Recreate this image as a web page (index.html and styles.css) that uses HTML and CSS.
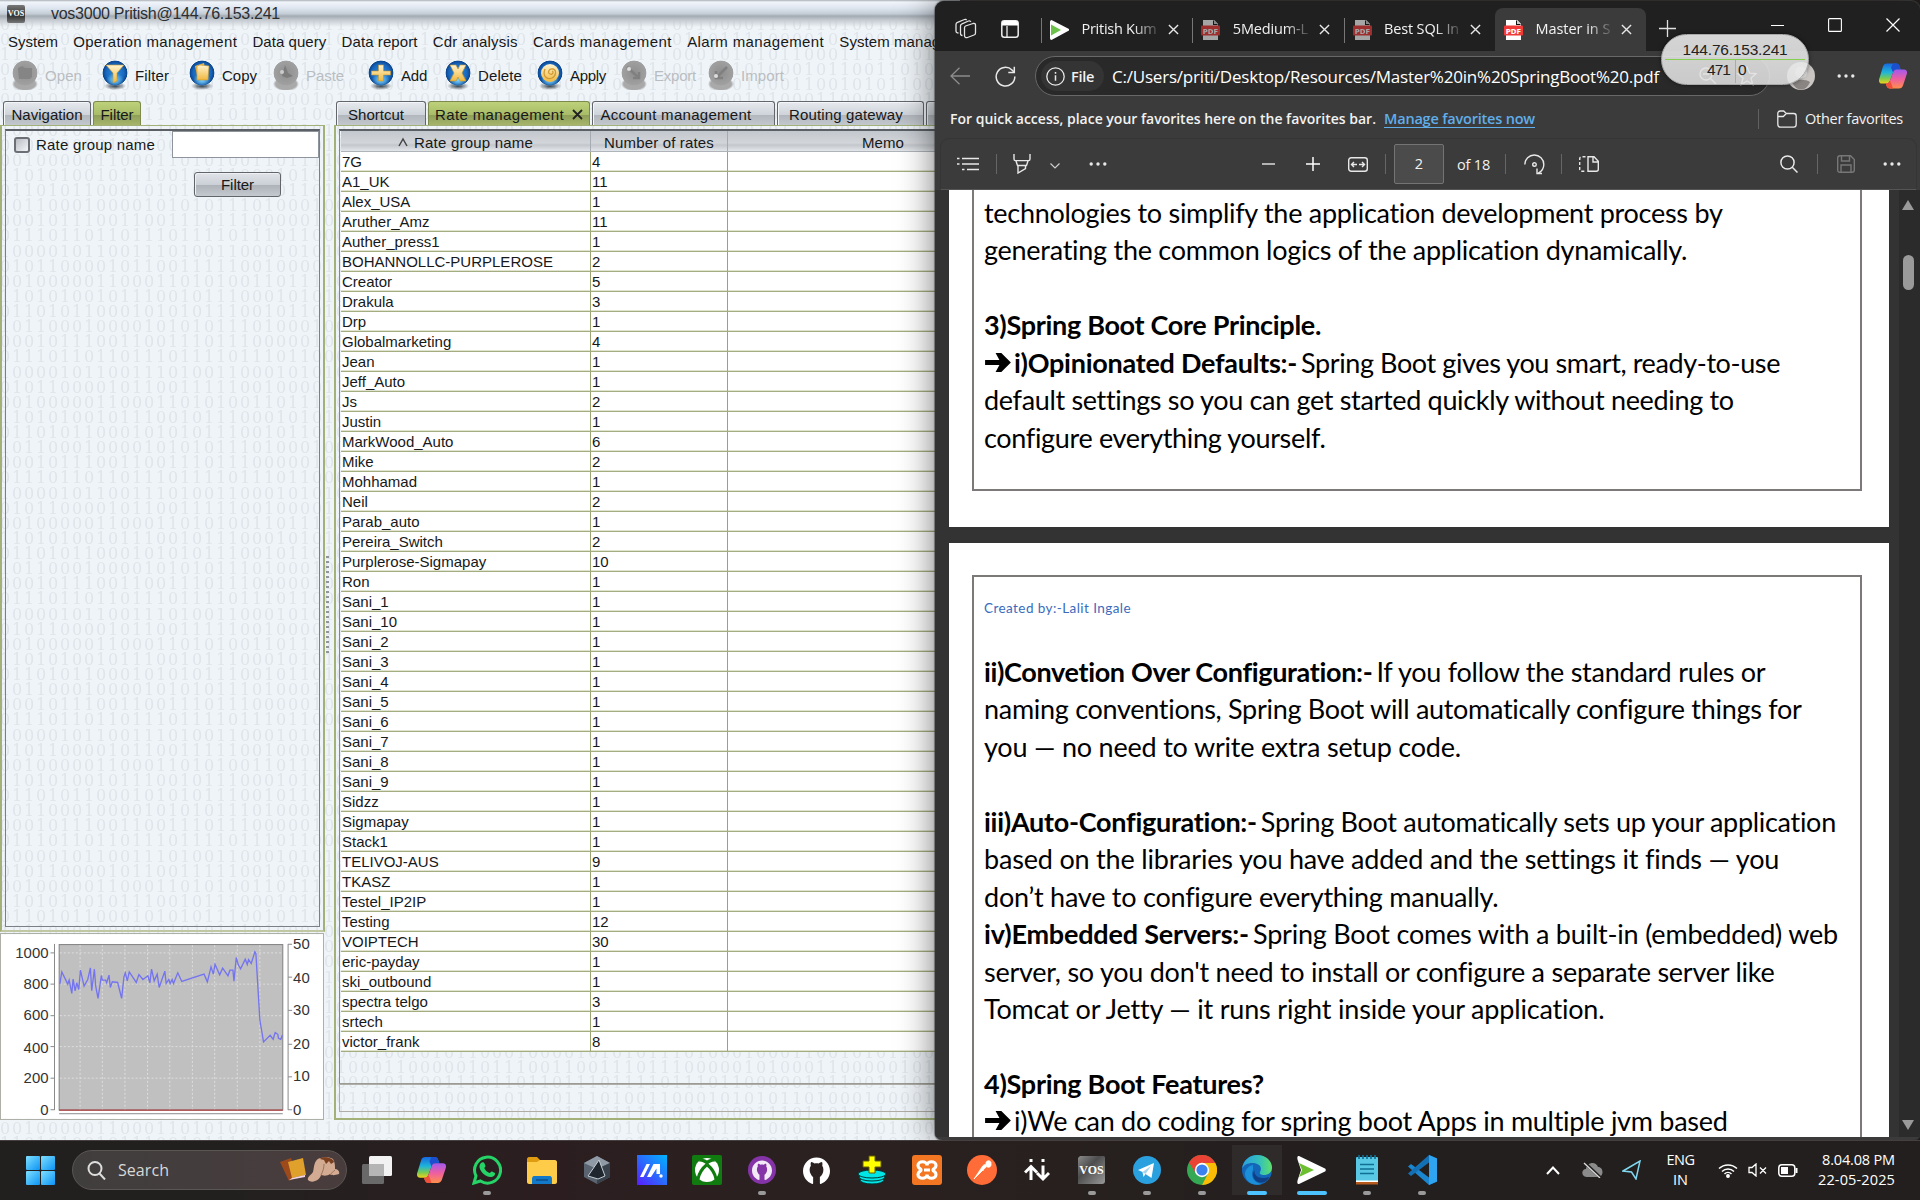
FILE: index.html
```html
<!DOCTYPE html>
<html lang="en">
<head>
<meta charset="utf-8">
<title>Desktop</title>
<link rel="stylesheet" href="styles.css">
</head>
<body>
<svg class="defs" width="0" height="0" aria-hidden="true">
  <defs>
    <linearGradient id="cpA" x1="0" y1="0" x2="0" y2="1"><stop offset="0" stop-color="#1769e0"/><stop offset=".45" stop-color="#20b5d8"/><stop offset=".75" stop-color="#7ccb4f"/><stop offset="1" stop-color="#f2d21c"/></linearGradient>
    <linearGradient id="cpB" x1="0" y1="0" x2="0" y2="1"><stop offset="0" stop-color="#a259f0"/><stop offset=".5" stop-color="#ee5fa0"/><stop offset="1" stop-color="#ff8f4a"/></linearGradient>
    <linearGradient id="gold" x1="0" y1="0" x2="0" y2="1"><stop offset="0" stop-color="#fff3cf"/><stop offset="1" stop-color="#f0b83e"/></linearGradient>
    <linearGradient id="edgeA" x1="0" y1="0" x2="1" y2="0"><stop offset="0" stop-color="#2a9fe0"/><stop offset=".6" stop-color="#35c1b9"/><stop offset="1" stop-color="#5fe06a"/></linearGradient>
    <linearGradient id="blueM" x1="0" y1="1" x2="1" y2="0"><stop offset="0" stop-color="#5a1cff"/><stop offset=".5" stop-color="#2a6cff"/><stop offset="1" stop-color="#00b4ff"/></linearGradient>
    <linearGradient id="vosG" x1="0" y1="0" x2="1" y2="1"><stop offset="0" stop-color="#8a8a8a"/><stop offset=".4" stop-color="#4d4d4d"/><stop offset="1" stop-color="#999"/></linearGradient>
    <linearGradient id="winG" x1="0" y1="0" x2="1" y2="1"><stop offset="0" stop-color="#7fe0ff"/><stop offset="1" stop-color="#0a93f5"/></linearGradient>
    <symbol id="copilot" viewBox="0 0 28 25">
      <path d="M8 0h9c2 0 3 1 3.600 3l1 3h-4c-2 0-3 1-3.600 3l-3 8c-.6 2-2 3-4 3H3c-2.500 0-3.500-2-2.800-4.500L4 3C4.600 1 6 0 8 0z" fill="url(#cpA)"/>
      <path d="M14 0h3c2 0 3 1 3.600 3l1 3h-4c-2 0-3 1-3.600 3L12 4z" fill="#1b4fd0"/>
      <path d="M20 25h-9c-2 0-3-1-3.600-3l-.6-2c2.200 0 3.600-1 4.200-3l3-8c.6-2 2-3 4-3h7c2.500 0 3.500 2 2.800 4.500L24 22c-.6 2-2 3-4 3z" fill="url(#cpB)"/>
      <path d="M14 25h-3c-2 0-3-1-3.600-3l-.6-2c2.200 0 3.600-1 4.200-3l2 5z" fill="#f0503a"/>
    </symbol>
    <symbol id="pdf" viewBox="0 0 19 20">
      <path d="M2 0h11l4 4v16H2z" fill="#fff"/><path d="M12 0v5h5z" fill="#111"/><path d="M13 0l4 4h-4z" fill="#ccc"/>
      <rect x="0" y="5.500" width="19" height="10" rx="1" fill="#f03a3a"/>
      <text x="9.500" y="13.600" font-family="DejaVu Sans" font-weight="700" font-size="6.800" fill="#fff" text-anchor="middle">PDF</text>
    </symbol>
    <symbol id="close" viewBox="0 0 12 12"><path d="M1 1l10 10M11 1L1 11" stroke="#e8e8e8" stroke-width="1.500"/></symbol>
    <symbol id="octo" viewBox="0 0 24 24"><path d="M12 .5C5.400.5 0 5.800 0 12.500c0 5.300 3.400 9.800 8.200 11.400.6.1.8-.3.800-.6v-5.600c-.9-.6-1.600-1.300-2-2.400C5.500 13 5.500 9.500 7 7.700c-.3-1-.2-2.300.2-3.200 1.200 0 2.300.7 3 1.200 1.200-.3 2.500-.3 3.700 0 .8-.5 1.900-1.200 3-1.200.4.900.5 2.200.2 3.200 1.400 1.800 1.400 5.300 0 7.600-.5 1.100-1.200 1.800-2.100 2.400v5.600c0 .3.200.7.800.6C20.600 22.300 24 17.800 24 12.500 24 5.800 18.600.5 12 .5z"/></symbol>
    <symbol id="dots" viewBox="0 0 18 4"><g fill="#e8e8e8"><circle cx="2.200" cy="2" r="1.700"/><circle cx="9" cy="2" r="1.700"/><circle cx="15.800" cy="2" r="1.700"/></g></symbol>
  </defs>
</svg>

<main class="desktop">
  <section class="vos">
    <header class="vos-title"><i class="vos-logo">VOS</i><span data-w="229">vos3000 Pritish@144.76.153.241</span></header>
    <nav class="vos-menu">
      <span data-w="50">System</span><span data-w="164">Operation management</span><span data-w="74">Data query</span><span data-w="76">Data report</span><span data-w="85">Cdr analysis</span><span data-w="139">Cards management</span><span data-w="137">Alarm management</span><span data-w="143">System management</span>
    </nav>
    <div class="vos-tools">
      <div class="tool off"><svg class="orb" viewBox="0 0 26 30"><path d="M6 8l4-2 3 2h7v9l-2 2H7z" fill="#858585"/></svg><span data-w="37">Open</span></div>
      <div class="tool"><svg class="orb" viewBox="0 0 26 30"><path d="M4 5h18l-7 8v8l-4 2v-10z" fill="url(#gold)" stroke="#c9932a" stroke-width=".6"/></svg><span data-w="34">Filter</span></div>
      <div class="tool"><svg class="orb" viewBox="0 0 26 30"><path d="M6 6l9-3 3 14-9 3z" fill="#e9b548"/><path d="M8 6l3-1 9 1-1 14-11 0z" fill="url(#gold)" stroke="#c9932a" stroke-width=".6"/></svg><span data-w="35">Copy</span></div>
      <div class="tool off"><svg class="orb" viewBox="0 0 26 30"><path d="M12 5l3 8 5 3-6 2-5-2z" fill="#7c7c7c"/><circle cx="9" cy="12" r="2" fill="#ccc"/></svg><span data-w="38">Paste</span></div>
      <div class="tool"><svg class="orb" viewBox="0 0 26 30"><path d="M10.500 5h5v6h7v4h-7v6h-5v-6h-7v-4h7z" fill="url(#gold)" stroke="#c9932a" stroke-width=".6"/></svg><span data-w="26">Add</span></div>
      <div class="tool"><svg class="orb" viewBox="0 0 26 30"><path d="M5 5h6l2 4 2-4h6l-4 8 4 8h-6l-2-4-2 4H5l4-8z" fill="url(#gold)" stroke="#c9932a" stroke-width=".6"/></svg><span data-w="44">Delete</span></div>
      <div class="tool"><svg class="orb" viewBox="0 0 26 30"><circle cx="13" cy="13" r="9" fill="url(#gold)"/><path d="M8 9c-3 8 3 11 7 9s5-8 1-9-6 4-3 5 4-2 2-3" fill="none" stroke="#cf9a35" stroke-width="1.300"/></svg><span data-w="36">Apply</span></div>
      <div class="tool off"><svg class="orb" viewBox="0 0 26 30"><path d="M6 7l12 11M18 12v6h-6" stroke="#808080" stroke-width="2.500" fill="none"/><circle cx="8" cy="9" r="2" fill="#ddd"/></svg><span data-w="42">Export</span></div>
      <div class="tool off"><svg class="orb" viewBox="0 0 26 30"><path d="M19 7L8 18M8 11v7h7" stroke="#808080" stroke-width="2.500" fill="none"/><circle cx="8" cy="16" r="2" fill="#ddd"/></svg><span data-w="43">Import</span></div>
    </div>
    <div class="vos-body">
      <aside class="side">
        <div class="vtabs"><div class="vtab t-nav"><span data-w="71">Navigation</span></div><div class="vtab on t-fil"><span data-w="33">Filter</span></div></div>
        <div class="frame"><div class="inner">
          <div class="frow"><i class="check"></i><span data-w="119">Rate group name</span><i class="input"></i></div>
          <div class="btn"><span data-w="33">Filter</span></div>
        </div></div>
        <svg class="chart" viewBox="3 102 969 555">
          <rect x="3" y="102" width="969" height="555" fill="#fff"/>
          <rect x="178" y="133" width="673" height="498" fill="#c0c0c0" stroke="#808080" stroke-width="3"/>
          <path d="M241 135V630M308 135V630M376 135V630M444 135V630M511 135V630M579 135V630M646 135V630M714 135V630M782 135V630M180 158H850M180 252H850M180 347H850M180 440H850M180 535H850" stroke="#dedede" stroke-width="3" stroke-dasharray="6 6"/>
          <path d="M164 131V631M152 158H164M152 252H164M152 347H164M152 440H164M152 535H164M152 630H164M867 131V631M867 132H879M867 231H879M867 331H879M867 433H879M867 531H879M867 630H879M178 642H851" stroke="#8a8a8a" stroke-width="3"/>
          <path d="M178 631H851" stroke="#b04040" stroke-width="4"/>
          <polyline fill="none" stroke="#7474f0" stroke-width="4" points="180,253 186,215 204,252 208,240 216,280 220,237 226,272 231,248 237,268 242,210 253,258 264,238 272,203 276,272 284,207 288,258 295,295 305,226 308,240 318,240 321,248 328,225 332,262 338,245 354,247 366,295 373,230 377,218 383,242 389,215 410,247 418,223 430,238 445,227 451,248 456,207 464,242 473,222 479,262 496,213 500,250 508,238 512,250 518,238 522,250 535,218 547,244 614,222 624,245 635,200 642,222 647,192 661,224 670,204 686,227 692,210 701,210 704,243 711,172 717,194 724,206 738,177 744,193 748,178 756,190 767,155 770,160 782,360 793,426 813,406 822,418 828,398 836,403 838,415 845,418 850,405"/>
          <g class="axis" text-anchor="end"><text x="146" y="174">1000</text><text x="146" y="267">800</text><text x="146" y="361">600</text><text x="146" y="458">400</text><text x="146" y="551">200</text><text x="146" y="646">0</text></g>
          <g class="axis"><text x="882" y="147">50</text><text x="882" y="248">40</text><text x="882" y="346">30</text><text x="882" y="448">20</text><text x="882" y="545">10</text><text x="882" y="646">0</text></g>
        </svg>
      </aside>
      <div class="split"><i></i></div>
      <div class="content">
        <div class="vtabs">
          <div class="vtab c1"><span data-w="56">Shortcut</span></div>
          <div class="vtab on c2"><span data-w="129">Rate management</span><svg width="11" height="11" viewBox="0 0 11 11"><path d="M1 1l9 9M10 1l-9 9" stroke="#222" stroke-width="1.800"/></svg></div>
          <div class="vtab c3"><span data-w="151">Account management</span></div>
          <div class="vtab c4"><span data-w="114">Routing gateway</span></div>
          <div class="vtab c5"></div>
        </div>
        <div class="frame"><div class="tablebox">
          <div class="trow thead"><div><svg width="10" height="10" viewBox="0 0 10 10"><path d="M1 9l4-7 4 7" fill="none" stroke="#444" stroke-width="1.500"/></svg><span data-w="119">Rate group name</span></div><div><span data-w="110">Number of rates</span></div><div><span data-w="42">Memo</span></div></div>
          <div id="rates"></div>
        </div><div class="lowbox"></div></div>
      </div>
    </div>
  </section>

  <section class="edge">
    <div class="strip">
      <svg class="ws" width="22" height="22" viewBox="0 0 22 22" fill="none" stroke="#e4e4e4" stroke-width="1.300"><path d="M10.500 8l7.500-2.500c1.500-.4 2.500.3 2.500 1.500v8c0 1-.5 1.700-1.500 2L12.500 19.500c-1.500.6-3-.2-3-1.800V10c0-1 .3-1.700 1-2z"/><path d="M7.500 17.500c-1.200 0-2-.7-2-2V8c0-1 .6-1.800 1.500-2.100L13.500 3c1-.3 2 0 2.300.9M3.500 15c-1.500 0-2.500-.6-2.500-2V6.500c0-1 .6-1.800 1.500-2.100L9.500 1.500c1-.3 1.800 0 2 .7"/></svg>
      <svg class="vt" width="18" height="18" viewBox="0 0 18 18"><rect x=".8" y=".8" width="16.400" height="16.400" rx="2.500" fill="none" stroke="#eee" stroke-width="1.500"/><path d="M1 5.500V3a2 2 0 012-2h12a2 2 0 012 2v2.500z" fill="#fff"/><path d="M6 6v11" stroke="#eee" stroke-width="1.300"/></svg>
      <div class="etab"><svg width="19" height="20" viewBox="0 0 19 20"><path d="M1.500 0L19 9c.6.300.6 1.200 0 1.500L1.500 20C.6 20 0 19 0 18V2C0 1 .6 0 1.500 0z" fill="#fff"/><path d="M1 4.500l10 5.500-10 5.500z" fill="#6cc24a"/></svg><div class="tt"><span data-w="75">Pritish Kum</span></div><svg class="x"><use href="#close"/></svg></div>
      <div class="etab"><svg class="dim" width="19" height="20"><use href="#pdf"/></svg><div class="tt"><span data-w="75">5Medium-L</span></div><svg class="x"><use href="#close"/></svg></div>
      <div class="etab"><svg class="dim" width="19" height="20"><use href="#pdf"/></svg><div class="tt"><span data-w="75">Best SQL In</span></div><svg class="x"><use href="#close"/></svg></div>
      <div class="etab act"><svg width="19" height="20"><use href="#pdf"/></svg><div class="tt"><span data-w="75">Master in S</span></div><svg class="x"><use href="#close"/></svg></div>
      <svg class="plus" width="17" height="17" viewBox="0 0 17 17"><path d="M8.500 0v17M0 8.500h17" stroke="#e0e0e0" stroke-width="1.300"/></svg>
      <div class="wctl"><svg width="13" height="14" viewBox="0 0 13 14"><path d="M0 7.500h13" stroke="#fff" stroke-width="1.200"/></svg><svg width="14" height="14" viewBox="0 0 14 14"><rect x=".6" y=".6" width="12.800" height="12.800" rx="1" fill="none" stroke="#fff" stroke-width="1.100"/></svg><svg width="14" height="14" viewBox="0 0 14 14"><path d="M.5.5l13 13M13.500.5l-13 13" stroke="#fff" stroke-width="1.200"/></svg></div>
    </div>
    <div class="addr">
      <svg class="back" width="20" height="18" viewBox="0 0 20 18" fill="none" stroke="#8c8c8c" stroke-width="1.300"><path d="M20 9H1M9.500.8L1 9l8.500 8.200"/></svg>
      <svg class="reload" width="21" height="21" viewBox="0 0 21 21" fill="none" stroke="#e8e8e8" stroke-width="1.500"><path d="M19.800 10.500A9.300 9.300 0 1117 4l2 2"/><path d="M19.300.8v5.700h-6"/></svg>
      <div class="omni"><div class="chip"><svg width="19" height="19" viewBox="0 0 19 19" fill="none" stroke="#e8e8e8" stroke-width="1.300"><circle cx="9.500" cy="9.500" r="8.700"/><path d="M9.500 8.300v5.400M9.500 5v1.800" stroke-width="1.500"/></svg><span data-w="23">File</span></div><span class="url" data-w="547">C:/Users/priti/Desktop/Resources/Master%20in%20SpringBoot%20.pdf</span><i class="spacer"></i><svg class="oi" width="58" height="20" viewBox="0 0 58 20" fill="none" stroke="#ccc" stroke-width="1.400"><circle cx="7" cy="8" r="6"/><path d="M4 8h6M11 12l6 6M48 1l2.600 6.200 6.400.5-5 4.300 1.600 6.500L48 15l-5.600 3.500L44 12l-5-4.300 6.400-.5z"/></svg></div>
      <svg class="ava" width="28" height="28" viewBox="0 0 28 28"><circle cx="14" cy="14" r="14" fill="#c9c6c4"/><circle cx="14" cy="10.500" r="6" fill="#e9e9e9"/><path d="M5 20c4-3 14-3 18 0-4 10-14 10-18 0z" fill="#8a8583"/></svg>
      <svg class="d1" width="18" height="4"><use href="#dots"/></svg>
      <svg class="cp" width="28" height="26"><use href="#copilot"/></svg>
    </div>
    <div class="favs"><b data-w="426">For quick access, place your favorites here on the favorites bar.</b><a data-w="151">Manage favorites now</a><i class="bar"></i><svg width="20" height="18" viewBox="0 0 20 18" fill="none" stroke="#e8e8e8" stroke-width="1.300"><path d="M.8 14V3.500C.8 2 1.800 1 3.300 1h3.400l2.600 2.500h7.400c1.500 0 2.500 1 2.500 2.500V14c0 2-1 3.200-2.500 3.200H3.300C1.800 17.200.8 16 .8 14zM.8 6.500h5.500L9.300 3.500"/></svg><span data-w="98">Other favorites</span></div>
    <div class="ptools">
      <svg width="22" height="14" viewBox="0 0 22 14" stroke="#e8e8e8" stroke-width="1.400"><path d="M5 1.500h17M5 7h17M10 12.500h12M0 1.500h2.500M0 7h2.500M5 12.500h2.500"/></svg>
      <i class="sep s1"></i>
      <svg class="hl" width="18" height="20" viewBox="0 0 18 20" fill="none" stroke="#e8e8e8" stroke-width="1.400"><path d="M1 0v5c0 1 .6 1.600 1.500 1.600h13c1 0 1.500-.6 1.500-1.600V0M3 7l1.500 4.500h9L15 7M5 11.500V19l7.500-4.500v-3"/></svg>
      <svg class="cv" width="10" height="6" viewBox="0 0 10 6" fill="none" stroke="#ccc" stroke-width="1.200"><path d="M.5.500L5 5 9.500.500"/></svg>
      <svg class="d2" width="18" height="4"><use href="#dots"/></svg>
      <svg class="mi" width="13" height="14" viewBox="0 0 13 14"><path d="M0 7h13" stroke="#ddd" stroke-width="1.500"/></svg>
      <svg class="pl" width="14" height="14" viewBox="0 0 14 14"><path d="M0 7h14M7 0v14" stroke="#fff" stroke-width="1.500"/></svg>
      <svg class="fw" width="20" height="15" viewBox="0 0 20 15" fill="none" stroke="#e8e8e8" stroke-width="1.400"><rect x=".7" y=".7" width="18.600" height="13.600" rx="2.500"/><path d="M9 7.500H4M6 5L3.500 7.500 6 10M11 7.500h5M14 5l2.500 2.500L14 10"/></svg>
      <i class="sep s2"></i><div class="pg">2</div><span class="of" data-w="33">of 18</span><i class="sep s3"></i>
      <svg class="rot" width="21" height="21" viewBox="0 0 21 21" fill="none" stroke="#e8e8e8" stroke-width="1.400"><path d="M.8 10.500a9.500 9.500 0 0119 0c0 4-2.300 7-5.500 8.700M13 14.500v5h5"/><circle cx="10.500" cy="10.500" r="1.800"/></svg>
      <i class="sep s4"></i>
      <svg class="pv" width="20" height="16" viewBox="0 0 20 16" fill="none" stroke="#e8e8e8" stroke-width="1.400"><path d="M9 .7h6l4.300 4.500v8c0 1.300-.7 2-2 2H9zM14 1v5h5"/><path d="M6.500.7H3C1.500.7.7 1.500.7 3v10c0 1.500.8 2.200 2.300 2.200h3.500" stroke-dasharray="3 2"/></svg>
      <i class="spacer"></i>
      <svg class="se" width="18" height="18" viewBox="0 0 18 18" fill="none" stroke="#e8e8e8" stroke-width="1.500"><circle cx="7.500" cy="7.500" r="6.600"/><path d="M12.300 12.300l5.200 5.200"/></svg>
      <i class="sep s5"></i>
      <svg class="sv" width="18" height="18" viewBox="0 0 18 18" fill="none" stroke="#777" stroke-width="1.400"><path d="M.7 3c0-1.500.8-2.300 2.300-2.300h10.500l3.800 3.800V15c0 1.500-.8 2.300-2.300 2.300H3C1.500 17.300.7 16.500.7 15zM4.500 1v5h8V1M4 17v-7h10v7"/></svg>
      <svg class="d3" width="18" height="4"><use href="#dots"/></svg>
    </div>
    <div class="viewer">
      <div class="pages">
        <article class="page p1"><div class="pframe">
          <p><span data-w="739">technologies to simplify the application development process by</span></p>
          <p><span data-w="704">generating the common logics of the application dynamically.</span></p>
          <p></p>
          <p><b data-w="337">3)Spring Boot Core Principle.</b></p>
          <p><svg class="arrow" viewBox="0 0 28 22"><path d="M1 8.500h15L12 1h6l10 10-10 10h-6l4-7.500H1z"/></svg><b data-w="283">i)Opinionated Defaults:-</b><span data-w="479">Spring Boot gives you smart, ready-to-use</span></p>
          <p><span data-w="749">default settings so you can get started quickly without needing to</span></p>
          <p><span data-w="341">configure everything yourself.</span></p>
        </div></article>
        <article class="page p2"><div class="pframe">
          <p class="by"><span data-w="147">Created by:-Lalit Ingale</span></p>
          <p><b data-w="389">ii)Convetion Over Configuration:-</b><span data-w="389">If you follow the standard rules or</span></p>
          <p><span data-w="818">naming conventions, Spring Boot will automatically configure things for</span></p>
          <p><span data-w="477">you — no need to write extra setup code.</span></p>
          <p></p>
          <p><b data-w="273">iii)Auto-Configuration:-</b><span data-w="576">Spring Boot automatically sets up your application</span></p>
          <p><span data-w="794">based on the libraries you have added and the settings it finds — you</span></p>
          <p><span data-w="514">don’t have to configure everything manually.</span></p>
          <p><b data-w="265">iv)Embedded Servers:-</b><span data-w="585">Spring Boot comes with a built-in (embedded) web</span></p>
          <p><span data-w="790">server, so you don't need to install or configure a separate server like</span></p>
          <p><span data-w="620">Tomcat or Jetty — it runs right inside your application.</span></p>
          <p></p>
          <p><b data-w="280">4)Spring Boot Features?</b></p>
          <p><svg class="arrow" viewBox="0 0 28 22"><path d="M1 8.500h15L12 1h6l10 10-10 10h-6l4-7.500H1z"/></svg><span data-w="714">i)We can do coding for spring boot Apps in multiple jvm based</span></p>
        </div></article>
      </div>
      <div class="scroll"><i class="up"></i><i class="thumb"></i><i class="spacer"></i><i class="down"></i></div>
    </div>
  </section>

  <div class="monitor"><span class="ip" data-w="105">144.76.153.241</span><div class="cnt"><span data-w="23">471</span><span class="z">0</span></div></div>

  <footer class="taskbar">
    <div class="app start"><svg width="29" height="29" viewBox="0 0 29 29" fill="url(#winG)"><rect width="14" height="14" rx="1"/><rect x="15" width="14" height="14" rx="1"/><rect y="15" width="14" height="14" rx="1"/><rect x="15" y="15" width="14" height="14" rx="1"/></svg></div>
    <div class="search"><svg width="19" height="19" viewBox="0 0 19 19" fill="none" stroke="#ddd" stroke-width="2"><circle cx="8" cy="7.500" r="6.500"/><path d="M12.500 12.500l5.500 6"/></svg><span data-w="51">Search</span><i class="spacer"></i>
      <svg width="60" height="26" viewBox="0 0 60 26"><path d="M0 5l11-4 7 18-9 5z" fill="#9c4a1c"/><path d="M8 5l15-4 3 17-14 3z" fill="#e0a02c"/><path d="M9 23l16-3v-2L12 21z" fill="#f3d6e6"/><path d="M28 23c-1-3 3-5 5-8 1-4 1-14 8-14 4-1 9-1 12 1 2 3 2 7 2 10 3 0 5 3 4 5-4 1-6 2-9 0-2 2-7 2-9 1-1 5-9 9-13 5z" fill="#d2ab92"/><path d="M40 2c2-3 13-2 14 3l-3 2-2-3-3 3-2-4z" fill="#7a3f1e"/><path d="M44 7c0 4-1 7-3 11M50 18c1-2 3-3 5-5" stroke="#9a755c" fill="none"/></svg></div>
    <div class="app"><svg width="30" height="28" viewBox="0 0 30 28"><rect x="7" width="23" height="20" rx="1.500" fill="#f2f2f2"/><rect y="8" width="22" height="20" rx="1.500" fill="#777" fill-opacity=".85"/><rect x="7" y="8" width="15" height="12" fill="#b5b5b5"/></svg></div>
    <div class="app"><svg width="29" height="26"><use href="#copilot"/></svg></div>
    <div class="app run"><svg width="30" height="30" viewBox="0 0 30 30"><path d="M2 28l2-7a13 13 0 114.500 5z" fill="none" stroke="#25d366" stroke-width="3"/><path d="M9 8c1-1 3-1 3.500.5l1 2.500c0 1-1.500 1.500-1 2.500 1 2 3 3.500 5 4.500 1 0 1.500-1.800 2.500-1.500l3 1.500c.5 3-3 4.500-5 4-6-1-11-7-10.500-11 .200-1 .5-2.200 1.500-3z" fill="#25d366"/></svg></div>
    <div class="app"><svg width="30" height="27" viewBox="0 0 30 27"><path d="M0 2C0 1 1 0 2 0h8l3 3v5H0z" fill="#e09c10"/><path d="M0 5h10l3-2h15c1 0 2 1 2 2v20c0 1-1 2-2 2H2c-1 0-2-1-2-2z" fill="#ffcc4a"/><path d="M5 27v-5c0-2 1-3 2-3h16c1 0 2 1 2 3v5z" fill="#1478c8"/><path d="M9 23h12" stroke="#0a4e8c" stroke-width="1.500"/></svg></div>
    <div class="app"><svg width="26" height="28" viewBox="0 0 26 28"><path d="M13 0l13 7v14l-13 7-13-7V7z" fill="#596470"/><path d="M13 0l13 7-13 6L0 7z" fill="#8f9aa6"/><path d="M13 28V13l13-6v14z" fill="#39424c"/><path d="M15 4L4 20l10 3 7-3z" fill="#20262d" stroke="#c5ced6" stroke-width="1"/></svg></div>
    <div class="app"><svg width="30" height="30" viewBox="0 0 30 30"><rect width="30" height="30" fill="url(#blueM)"/><path d="M3 22L9.500 9h3.500L6.500 22zM10 22l6.500-13H23v10h-3.500v-5.500L14 22z" fill="#fff"/><circle cx="24" cy="21" r="1.700" fill="#fff"/></svg></div>
    <div class="app"><svg width="30" height="30" viewBox="0 0 30 30"><rect width="30" height="30" rx="2" fill="#107c10"/><circle cx="15" cy="15" r="12" fill="#fff"/><path d="M6.500 6.500c3-.5 6 1 8.500 3.500 2.500-2.500 5.500-4 8.500-3.500l-2-2.500c-2.500-.5-4.500.5-6.500 1.500C13 4.500 11 3.500 8.500 4z" fill="#107c10"/><path d="M15 9.500C9.500 14 7 18.500 6 24M15 9.500c5.500 4.500 8 9 9 14.500" fill="none" stroke="#107c10" stroke-width="3.200"/></svg></div>
    <div class="app run"><svg width="28" height="28" viewBox="0 0 28 28"><circle cx="14" cy="14" r="14" fill="#8534a8"/><svg x="4" y="4" width="20" height="20" fill="#f3eaf7"><use href="#octo"/></svg></svg></div>
    <div class="app"><svg width="27" height="27" fill="#fff"><use href="#octo"/></svg></div>
    <div class="app"><svg width="30" height="30" viewBox="0 0 30 30"><g fill="#00e5e5" stroke="#033" stroke-width="1"><ellipse cx="15" cy="25" rx="12" ry="4"/><ellipse cx="15" cy="22" rx="13" ry="4"/><ellipse cx="15" cy="19" rx="14" ry="4"/></g><path d="M12 1h6v5h6v6h-6v6h-6v-6H6V6h6z" fill="#ffff00" stroke="#665f00"/></svg></div>
    <div class="app"><svg width="30" height="30" viewBox="0 0 30 30"><rect width="30" height="30" rx="3" fill="#f37623"/><path d="M15 10.500c0-5-9-5-9 0 0 3 3 3 3 4.500s-3 1.500-3 4.500c0 5 9 5 9 0 0 5 9 5 9 0 0-3-3-3-3-4.500s3-1.500 3-4.500c0-5-9-5-9 0zM12 15h6" fill="none" stroke="#fff" stroke-width="3.200"/></svg></div>
    <div class="app"><svg width="30" height="30" viewBox="0 0 30 30"><circle cx="15" cy="15" r="15" fill="#ff6c37"/><path d="M7 24l8-12c1-2 3-3 4-2s0 3-2 4zM19 9a2.600 2.600 0 105 0 2.600 2.600 0 10-5 0M14 16l3-1" fill="#fff" stroke="#ffe" stroke-width=".8"/></svg></div>
    <div class="app"><svg width="26" height="24" viewBox="0 0 26 24" fill="none" stroke="#fff" stroke-width="3"><path d="M7 22V8.500M1 14.500L7 8.500l6 6M19 7.500V21M13 15l6 6 6-6M5.500 2.500h3M17.500 2.500h3"/></svg></div>
    <div class="app run"><svg width="27" height="28" viewBox="0 0 27 28"><path d="M2 0h23c2 0 2 1 2 3v22c0 2-1 3-3 3H0V2z" fill="url(#vosG)"/><text x="13.500" y="18" font-family="Liberation Serif" font-weight="700" font-size="12" fill="#fff" text-anchor="middle">VOS</text></svg></div>
    <div class="app run"><svg width="28" height="28" viewBox="0 0 28 28"><circle cx="14" cy="14" r="14" fill="#2aa1de"/><path d="M5 14l16-7-2.500 15-6-4-2 3-1-5z" fill="#fff"/><path d="M9.500 16L18 10l-5.500 8" fill="#a9d4ee"/></svg></div>
    <div class="app run"><svg width="30" height="30" viewBox="0 0 30 30"><circle cx="15" cy="15" r="15" fill="#34a853"/><path d="M2 7.500A15 15 0 0128 7.500L28 8H15a7 7 0 00-6 10.500z" fill="#ea4335"/><path d="M28 7.500A15 15 0 0115 30l6.100-11.500A7 7 0 0021 11.500L15 8h13z" fill="#fbbc05"/><circle cx="15" cy="15" r="7.200" fill="#fff"/><circle cx="15" cy="15" r="5.600" fill="#3b82f0"/></svg></div>
    <div class="app sel wide"><svg width="30" height="30" viewBox="0 0 30 30"><circle cx="15" cy="15" r="15" fill="#1466b8"/><path d="M0 14C1 5 8 0 15 0c9 0 15 6 15 12.500 0 5-4 7.500-8 7.500-3 0-5-1-4-3 2-3 1-7-4-8.500C8 7 2 9 0 14z" fill="url(#edgeA)"/><path d="M11 15c-3 6 1 13 9 14-9 3-17-3-17-10 0-4 3-8 8-9z" fill="#1b8fd8"/><path d="M12.500 15c-1 6 5 10 15 7-3 5-7 6-10 5.500-6-1-8-8-5-12.500z" fill="#0f3f84"/></svg></div>
    <div class="app full"><svg width="29" height="28" viewBox="0 0 29 28"><path d="M2 0l26 12.500c1 .5 1 2.500 0 3L2 28c-2 0-2-2-1-5l3-9L1 5C0 2 0 0 2 0z" fill="#fff"/><path d="M2 7l15 7L2 21l3-7z" fill="#6cc030"/></svg></div>
    <div class="app run"><svg width="22" height="30" viewBox="0 0 22 30"><rect y="2" width="22" height="25" rx="1" fill="#58c8e4"/><path d="M0 26h22v3.500H0z" fill="#b55a1c"/><path d="M0 25.500h22v1.500H0z" fill="#fff"/><path d="M4 9.500h14M4 14h14M4 18.500h14M3 0v4M7 0v4M11 0v4M15 0v4M19 0v4" stroke="#0f6f94" stroke-width="1.700"/></svg></div>
    <div class="app run"><svg width="30" height="30" viewBox="0 0 30 30"><path d="M22 0l8 3.500v23L22 30 1 11.500 4 9l18 13.500z" fill="#1a86d0"/><path d="M22 0L1 18.500 4 21 22 7.500z" fill="#1470b4"/><path d="M22 0l8 3.500v23L22 30z" fill="#2fa4f0"/></svg></div>
    <i class="spacer"></i>
    <svg class="k1" width="14" height="9" viewBox="0 0 14 9"><path d="M1 8l6-6.500L13 8" fill="none" stroke="#fff" stroke-width="2"/></svg>
    <svg class="k2" width="21" height="16" viewBox="0 0 21 16"><path d="M4.500 15C-1 15-1 7 4 7 5 0 14-1 16 5c6 0 6 10 0 10z" fill="#8b8b8b"/><path d="M3 1l16 15" stroke="#231f1e" stroke-width="3"/><path d="M2 1l16 15" stroke="#ddd" stroke-width="1.300"/></svg>
    <svg class="k3" width="19" height="20" viewBox="0 0 19 20"><path d="M1 11L18 1l-4 18-4.500-7z" fill="none" stroke="#7fd8f0" stroke-width="1.500"/></svg>
    <div class="lang"><span data-w="28">ENG</span><span data-w="15">IN</span></div>
    <svg class="k4" width="20" height="15" viewBox="0 0 20 15" fill="none" stroke="#fff" stroke-width="1.500"><path d="M1 5.500a13 13 0 0118 0M4 8.500a8.500 8.500 0 0112 0M6.500 11a5 5 0 017 0"/><circle cx="10" cy="13" r="1.200" fill="#fff"/></svg>
    <svg class="k5" width="19" height="14" viewBox="0 0 19 14" fill="none" stroke="#fff" stroke-width="1.300"><path d="M1 4.500h3L8 1v12L4 9.500H1zM12 4.500l6 6M18 4.500l-6 6"/></svg>
    <svg class="k6" width="20" height="13" viewBox="0 0 20 13"><rect x=".8" y=".8" width="16" height="11.400" rx="3" fill="none" stroke="#fff" stroke-width="1.500"/><rect x="3" y="3" width="7" height="7" fill="#fff"/><path d="M18.500 4v5" stroke="#fff" stroke-width="2"/></svg>
    <div class="clock"><span data-w="73">8.04.08 PM</span><span data-w="77">22-05-2025</span></div>
  </footer>
</main>
<script src="app.js"></script>
</body>
</html>
```
FILE: styles.css
```css
* { box-sizing: border-box; }
body { margin: 0; background: #231f1e; font-family: "Liberation Sans", Arial, sans-serif; }
svg { display: block; flex: none; }
i { font-style: normal; flex: none; }
.defs { position: absolute; }
i.spacer { flex: 1; }
[data-w] { white-space: pre; flex: none; display: inline-block; }
.desktop { position: relative; width: 1920px; height: 1200px; overflow: hidden; }

/* VOS3000 client */
.vos {
  position: absolute; left: 0; top: 0; width: 960px; height: 1140px; overflow: hidden;
  color: #16181a; font-size: 15px;
  background: #eff4f8 url("data:image/svg+xml,%3Csvg xmlns='http://www.w3.org/2000/svg' width='432' height='121'%3E%3Cg font-family='DejaVu Serif' font-size='16' letter-spacing='1.820' fill='%23dfe5ea'%3E%3Ctext y='12'%3E100001011001110100110001010101101000%3C/text%3E%3Ctext y='27'%3E010110000101100111110010000111011010%3C/text%3E%3Ctext y='42'%3E001000001100011010100110111100001011%3C/text%3E%3Ctext y='57'%3E110101001011100101110001010101100011%3C/text%3E%3Ctext y='72'%3E011010110001010101110010110100010110%3C/text%3E%3Ctext y='87'%3E101100010000101010111010001000110010%3C/text%3E%3Ctext y='102'%3E000101110011001110111000001010001100%3C/text%3E%3Ctext y='117'%3E011101101101110111101110110000010110%3C/text%3E%3C/g%3E%3C/svg%3E") 0 3px;
}
.vos-title { height: 27px; display: flex; align-items: center; padding: 1px 7px 0; font-size: 16px; color: #2b2f33;
  background: linear-gradient(#aab0b5 0, #f1f5fb 2px, #dfe6ef 8px, #c3ccd6 14px, #a3aab2 16px, #c4cad0 20px, rgba(239,244,248,0) 27px); }
.vos-title span { margin-left: 26px; }
.vos-logo { width: 18px; height: 18px; border-radius: 2px; background: linear-gradient(#777, #333 60%, #777); color: #fff; font: bold 8px/17px "Liberation Serif", serif; text-align: center; }
.vos-menu { height: 28px; display: flex; align-items: center; gap: 15.200px; padding-left: 8px; }
.vos-tools { height: 46px; display: flex; padding: 5px 0 0 12px; }
.tool { display: flex; align-items: flex-start; gap: 7px; width: 90px; flex: none; }
.tool span { margin-top: 7px; line-height: 18px; }
.tool:nth-child(2) { width: 87px; }
.tool:nth-child(3) { width: 84px; }
.tool:nth-child(4) { width: 95px; }
.tool:nth-child(5) { width: 77px; }
.tool:nth-child(6) { width: 92px; }
.tool:nth-child(7) { width: 84px; }
.tool:nth-child(8) { width: 87px; }
.tool.off { color: #b9bdc1; }
.orb { width: 26px; height: 30px; background: radial-gradient(circle at 13px 17px, #6cc8fa 0, #2382d6 8px, #0d4ea0 12px, transparent 12.700px), radial-gradient(ellipse 10px 4px at 13px 26px, rgba(20,30,40,.9), transparent); }
.tool .orb { background: radial-gradient(circle at 13px 13px, transparent 12px, #eff4f800 12.500px), radial-gradient(ellipse 9px 7px at 13px 20px, #7fd6ff, rgba(110,200,250,0)), radial-gradient(circle at 13px 13px, #2d8de0 0, #1767bd 9px, #0d4690 12px, transparent 12.700px), radial-gradient(ellipse 11px 4px at 13px 26px, rgba(20,30,40,.9), transparent); }
.off .orb { background: radial-gradient(circle at 13px 13px, #8e8e8e 0, #a0a0a0 12px, transparent 12.700px), radial-gradient(ellipse 13px 7px at 13px 24px, #a9a9a9 80%, transparent); }
.vos-body { display: flex; height: 1018px; }
.side { width: 325px; flex: none; display: flex; flex-direction: column; }
.vtabs { display: flex; height: 24px; gap: 2px; padding-left: 3px; flex: none; }
.vtab { display: flex; align-items: center; justify-content: center; gap: 8px; flex: none; height: 24px; border: 1px solid #63676c; border-bottom: 0; border-radius: 3px 3px 0 0; padding-top: 2px;
  background: linear-gradient(#e6eaef 0, #cfd4da 55%, #b2b7bd 58%, #c3c8ce); box-shadow: inset 1px 1px #f4f6f8; }
.vtab.on { background: linear-gradient(#bdd07a 0, #a9bd68 55%, #909f58 58%, #a6b56b); border-color: #7d8a4b; box-shadow: none; }
.t-nav { width: 88px; } .t-fil { width: 48px; }
.c1 { width: 90px; padding-right: 10px; } .c2 { width: 162px; } .c3 { width: 183px; padding-right: 15px; } .c4 { width: 147px; padding-right: 9px; } .c5 { width: 60px; }
.content .vtabs { padding-left: 2px; }
.frame { border: 2px solid #a3b078; border-top-width: 1px; padding: 3px 3px 3px; flex: 1; }
.side .frame { height: 807px; flex: none; border-bottom-color: #bfc8a2; }
.side .frame .inner { height: 798px; border: 1px solid #7b8088; border-top: 2px solid #5c6066; }
.frow { display: flex; align-items: center; height: 27px; padding-left: 8px; }
.check { width: 16px; height: 16px; border: 2px solid #6c7076; border-radius: 3px; background: linear-gradient(135deg, #b8bdc3, #f4f6f8); margin-right: 6px; }
.input { width: 147px; height: 27px; margin-left: auto; background: #fff; border: 1px solid #8f959c; }
.btn { width: 87px; height: 25px; margin: 14px 0 0 188px; border: 1px solid #62666b; border-radius: 3px; display: flex; align-items: center; justify-content: center; background: linear-gradient(#e0e4e9 0, #cbd0d6 50%, #aeb3b9 54%, #c4c9cf); box-shadow: inset 1px 1px #eef0f3; }
.chart { width: 324px; height: 187px; margin-top: 1px; border: 1px solid #aeb0a8; }
.axis { font-size: 45px; fill: #333; }
.split { width: 9px; flex: none; display: flex; align-items: center; justify-content: center; }
.split i { width: 3px; height: 99px; margin-top: -10px; margin-left: -4px; background: repeating-linear-gradient(#90959b 0 2px, transparent 2px 5px); }
.content { width: 660px; flex: none; display: flex; flex-direction: column; }
.content .frame { flex: none; height: 995px; }
.tablebox { height: 955px; border: 1px solid #83888e; border-top: 2px solid #5c6066; border-bottom-color: #9a9c96; }
.trow { display: grid; grid-template-columns: 250px 137px 1fr; height: 20px; background: #fff; border-bottom: 1px solid #a3ad80; margin-left: 1px; box-shadow: inset 0 -1px #dfe3cf; }
.trow > div { border-right: 1px solid #9aa473; padding: 1px 0 0 1px; line-height: 17px; white-space: nowrap; }
.trow.thead { height: 21px; background: linear-gradient(#c3c8ce, #d2d5d9 60%, #c3c7cc 70%, #e4e7ea); border-bottom-color: #aeb4ba; box-shadow: none; }
.thead > div { display: flex; justify-content: center; align-items: center; gap: 6px; border-color: #a6abb1; padding: 2px 0 0; }
.thead > div:last-child { justify-content: flex-start; padding-left: 134px; }
.lowbox { height: 28px; border: 1px solid #b0ada6; }

/* Edge */
.edge { position: absolute; left: 935px; top: 1px; width: 985px; height: 1139px; background: #3b3b3b; border-radius: 9px 9px 7px 7px; overflow: hidden; color: #f2f2f2; font-family: "Open Sans", "Noto Sans", sans-serif; font-size: 14.500px; display: flex; flex-direction: column; box-shadow: 0 0 36px rgba(0,0,0,.55), 0 0 1px 1px rgba(90,90,90,.6); }
.strip { height: 50px; background: #202020; display: flex; align-items: flex-start; flex: none; }
.ws { margin: 17px 0 0 20px; } .vt { margin: 19px 22px 0 24px; }
.etab { width: 151.300px; height: 43px; margin-top: 7px; padding-left: 9px; display: flex; align-items: center; position: relative; flex: none; }
.etab::before { content: ""; position: absolute; left: 0; top: 10px; width: 1px; height: 25px; background: #777; }
.etab.act { background: #3b3b3b; border-radius: 8px 8px 0 0; }
.etab.act::before { display: none; }
.tt { width: 76px; margin: 0 10px 2px 12.500px; -webkit-mask: linear-gradient(90deg, #000 68%, rgba(0,0,0,.15)); mask: linear-gradient(90deg, #000 68%, rgba(0,0,0,.15)); }
.tt span { vertical-align: top; line-height: 22px; }
.x { width: 11px; height: 11px; }
.dim { opacity: .6; }
.plus { margin: 19px 0 0 13px; }
.wctl { display: flex; gap: 44px; margin: 17px 0 0 95px; }
.addr { height: 52px; display: flex; align-items: center; flex: none; padding-bottom: 2px; }
.back { margin-left: 15px; } .reload { margin: 0 19px 0 25px; }
.omni { width: 735px; height: 40px; border: 1px solid #686868; border-radius: 20px; background: #292929; display: flex; align-items: center; padding-left: 5px; flex: none; }
.chip { width: 63px; height: 30px; border-radius: 15px; background: #343434; display: flex; align-items: center; gap: 6px; padding-left: 5px; font-weight: 600; }
.url { margin-left: 8px; font-size: 17px; color: #fff; }
.oi { margin-right: 12px; }
.ava { margin: 0 22px 0 17px; } .d1 { margin-right: 24px; }
.favs { height: 34px; display: flex; align-items: center; padding: 0 0 3px 15px; flex: none; }
.favs b { font-weight: 600; font-size: 14px; }
.favs a { margin-left: 8px; color: #60aeea; text-decoration: underline; text-underline-offset: 3px; font-size: 14.500px; font-weight: 600; }
.favs .bar { width: 1px; height: 20px; background: #606060; margin: 0 18px 0 223px; }
.favs span { margin-left: 8px; }
.ptools { height: 52px; margin: 1px 3px 0 5px; border: 1px solid #353535; border-bottom-color: #555; border-radius: 9px 9px 0 0; display: flex; align-items: center; padding: 0 15px 0 16px; flex: none; }
.sep { width: 1px; height: 20px; background: #666; }
.s1 { margin: 0 16px 0 17px; } .cv { margin: 4px 29px 0 19px; } .mi { margin-left: 155px; } .pl { margin-left: 31px; } .fw { margin: 0 17px 0 28px; }
.pg { margin: 0 13px 0 8px; width: 50px; height: 40px; border: 1px solid #747474; border-radius: 2px; background: #4b4b4b; text-align: center; line-height: 38px; }
.s3 { margin: 0 18px 0 15px; } .s4 { margin: 0 17px 0 16px; } .s5 { margin: 0 19px; } .d3 { margin-left: 28px; }
.viewer { height: 947px; display: flex; background: #333; flex: none; }
.pages { width: 964px; height: 947px; padding-left: 14px; overflow: hidden; }
.page { width: 940px; background: #fff; color: #000; font: 27px/37.450px Lato, Carlito, sans-serif; }
.page p { margin: 0; height: 37.450px; display: flex; align-items: center; }
.page b { font-weight: 700; }
.page b + span { margin-left: 4px; }
.pframe { width: 890px; margin-left: 23px; border: 2px solid #7d7979; padding-left: 10px; }
.p1 { height: 337px; } .p1 .pframe { height: 301px; border-top: 0; padding-top: 4px; }
.p2 { height: 620px; margin-top: 16px; padding-top: 32px; } .p2 .pframe { height: 700px; }
.page .by { height: 63px; margin-bottom: 13px; color: #3a6bbd; font-size: 13.500px; }
.arrow { width: 27px; height: 21px; margin-right: 3px; }
.scroll { width: 21px; background: #2b2b2b; display: flex; flex-direction: column; align-items: flex-start; padding: 10px 0 7px 3px; }
.up, .down { width: 0; border: 6px solid transparent; border-top: 0; border-bottom: 10px solid #9a9a9a; }
.down { border: 6px solid transparent; border-bottom: 0; border-top: 10px solid #9a9a9a; }
.thumb { width: 11px; height: 35px; border-radius: 6px; background: #9a9a9a; margin: 45px 0 0 1px; }

/* Floating counter */
.monitor { position: absolute; left: 1661px; top: 34px; width: 148px; height: 51px; border-radius: 26px; background: linear-gradient(rgba(240,240,240,.87), rgba(228,228,228,.86)); border: 1px solid #a8a8a8; box-shadow: 0 0 4px rgba(0,0,0,.5); color: #222; font-size: 15.500px; text-align: center; }
.ip { height: 24px; line-height: 30px; display: block; margin: 0 auto; width: 105px; }
.cnt { border-top: 1px solid #86d050; margin: 0 3px; height: 24px; display: grid; grid-template-columns: 70px 1fr; line-height: 20px; }
.cnt span { text-align: right; padding-right: 5px; }
.cnt .z { border-left: 1px solid #86d050; text-align: left; padding: 0 0 0 2px; }

/* Taskbar */
.taskbar { position: absolute; left: 0; top: 1140px; width: 1920px; height: 60px; border-top: 1px solid #45403f; display: flex; align-items: center; padding-bottom: 1px; background: linear-gradient(90deg, #22201f 0, #22201f 12%, #2c1e20 28%, #2a2120 45%, #231f1e 70%); color: #fff; font-family: "Open Sans", "Noto Sans", sans-serif; font-size: 14.500px; }
.app { width: 55px; height: 60px; display: flex; align-items: center; justify-content: center; position: relative; flex: none; }
.start { width: 58px; margin: 0 3px 0 11px; }
.app::after { position: absolute; bottom: 5px; height: 4px; border-radius: 2px; }
.run::after { content: ""; width: 8px; background: #9a9a9a; }
.wide::after { content: ""; width: 20px; background: #4cc2ff; }
.full::after { content: ""; width: 30px; background: #4cc2ff; }
.sel { background: linear-gradient(#2f2b2a, #2f2b2a) center / 50px 50px no-repeat; }
.search { width: 275px; height: 40px; margin-right: 2px; border: 1px solid #5a5654; border-radius: 20px; background: linear-gradient(90deg, #403e3d, #493c3d); display: flex; align-items: center; padding: 0 6px 0 14px; color: #d8d8d8; font-size: 16px; flex: none; }
.search span { margin-left: 12px; }
.k1 { margin-right: 22px; } .k2 { margin-right: 19px; } .k3 { margin-right: 25px; } .k4 { margin: 0 10px 0 23px; } .k5 { margin-right: 11px; }
.lang { width: 29px; display: flex; flex-direction: column; align-items: center; line-height: 20px; }
.clock { display: flex; flex-direction: column; align-items: flex-end; line-height: 20px; margin: 0 25px 0 20px; }
```
FILE: app.js
```js
const rates = [
  ["7G", 4], ["A1_UK", 11], ["Alex_USA", 1], ["Aruther_Amz", 11], ["Auther_press1", 1],
  ["BOHANNOLLC-PURPLEROSE", 2], ["Creator", 5], ["Drakula", 3], ["Drp", 1], ["Globalmarketing", 4],
  ["Jean", 1], ["Jeff_Auto", 1], ["Js", 2], ["Justin", 1], ["MarkWood_Auto", 6], ["Mike", 2],
  ["Mohhamad", 1], ["Neil", 2], ["Parab_auto", 1], ["Pereira_Switch", 2], ["Purplerose-Sigmapay", 10],
  ["Ron", 1], ["Sani_1", 1], ["Sani_10", 1], ["Sani_2", 1], ["Sani_3", 1], ["Sani_4", 1],
  ["Sani_5", 1], ["Sani_6", 1], ["Sani_7", 1], ["Sani_8", 1], ["Sani_9", 1], ["Sidzz", 1],
  ["Sigmapay", 1], ["Stack1", 1], ["TELIVOJ-AUS", 9], ["TKASZ", 1], ["Testel_IP2IP", 1],
  ["Testing", 12], ["VOIPTECH", 30], ["eric-payday", 1], ["ski_outbound", 1], ["spectra telgo", 3],
  ["srtech", 1], ["victor_frank", 8]
];
document.getElementById("rates").innerHTML = rates
  .map(([name, n]) => `<div class="trow"><div>${name}</div><div>${n}</div><div></div></div>`)
  .join("");

for (const el of document.querySelectorAll("[data-w]")) {
  const range = document.createRange();
  range.selectNodeContents(el);
  const natural = range.getBoundingClientRect().width;
  const count = el.textContent.length;
  el.style.letterSpacing = (el.dataset.w - natural) / count + "px";
}
```
